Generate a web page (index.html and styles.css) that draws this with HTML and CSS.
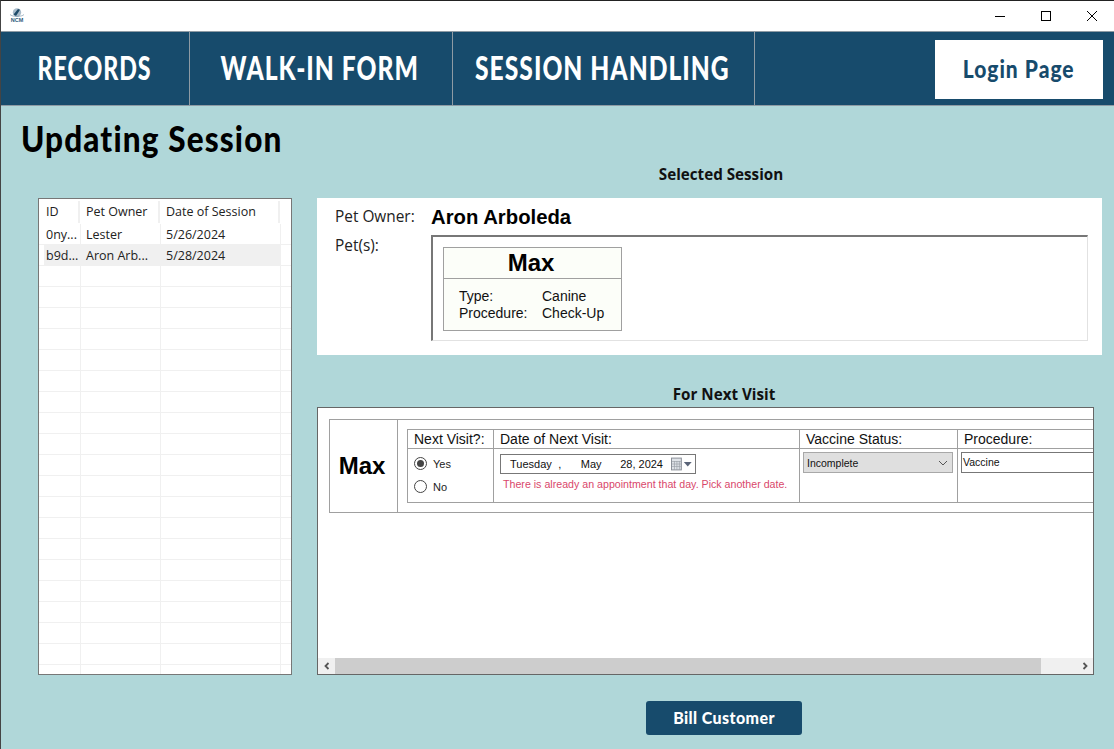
FILE: index.html
```html
<!DOCTYPE html>
<html lang="en">
<head>
<meta charset="utf-8">
<title>Updating Session</title>
<link rel="stylesheet" href="styles.css">
</head>
<body>
<div class="window">
  <header class="titlebar">
    <svg class="logo" width="16" height="15" viewBox="0 0 16 15"><circle cx="8" cy="4.500" r="4.200" fill="#a9bccb"/><path d="M4.500 6.500 L9 1 L11 1.800 L7 8 Z" fill="#1d4a68"/><path d="M1 6.500 C3 9 13 9 15 6.500" stroke="#6f8ca1" fill="none" stroke-width=".6"/><text x="8" y="14" text-anchor="middle" font-family="Liberation Sans" font-weight="700" font-size="5.500" fill="#2f5c7c">NCM</text></svg>
    <div class="winbtns">
      <svg width="12" height="12" viewBox="0 0 12 12"><path d="M1 6.500H11" stroke="#000" fill="none"/></svg>
      <svg width="12" height="12" viewBox="0 0 12 12"><rect x="1.500" y="1.500" width="9" height="9" stroke="#000" fill="none"/></svg>
      <svg width="12" height="12" viewBox="0 0 12 12"><path d="M1 1L11 11M11 1L1 11" stroke="#000" fill="none"/></svg>
    </div>
  </header>
  <nav class="nav">
    <a class="tab tab-records"><span>RECORDS</span></a>
    <a class="tab tab-walkin"><span>WALK-IN FORM</span></a>
    <a class="tab tab-session"><span>SESSION HANDLING</span></a>
    <a class="login"><span>Login Page</span></a>
  </nav>
  <main class="main">
    <h1 class="page-title"><span>Updating Session</span></h1>
    <div class="content">
      <section class="list">
        <div class="list-row list-head"><span>ID</span><span>Pet Owner</span><span>Date of Session</span></div>
        <div class="list-row"><span>0ny...</span><span>Lester</span><span>5/26/2024</span></div>
        <div class="list-row selected"><span>b9d...</span><span>Aron Arb...</span><span>5/28/2024</span></div>
        <div class="list-fill"></div>
      </section>
      <section class="right">
        <h2 class="heading heading-selected">Selected Session</h2>
        <div class="session-card">
          <div class="owner-row"><span class="label">Pet Owner:</span><strong class="owner">Aron Arboleda</strong></div>
          <div class="pets-row">
            <span class="label">Pet(s):</span>
            <div class="pets-box">
              <div class="pet-card">
                <div class="pet-name">Max</div>
                <div class="pet-info">
                  <span>Type:</span><span>Canine</span>
                  <span>Procedure:</span><span>Check-Up</span>
                </div>
              </div>
            </div>
          </div>
        </div>
        <h2 class="heading heading-next">For Next Visit</h2>
        <div class="visit-panel">
          <div class="visit-scroll">
            <div class="visit-row">
              <div class="visit-pet">Max</div>
              <div class="visit-body">
                <div class="visit-grid">
                  <div class="vh">Next Visit?:</div>
                  <div class="vh">Date of Next Visit:</div>
                  <div class="vh">Vaccine Status:</div>
                  <div class="vh">Procedure:</div>
                  <div class="vc radios">
                    <label class="radio"><span class="dot on"></span>Yes</label>
                    <label class="radio"><span class="dot"></span>No</label>
                  </div>
                  <div class="vc">
                    <div class="datepick">
                      <span class="d1">Tuesday</span><span class="d2">,</span><span class="d3">May</span><span class="d4">28, 2024</span>
                      <svg class="cal" width="24" height="14" viewBox="0 0 24 14"><rect x="0.500" y="1" width="10" height="12" fill="#dfe3e8" stroke="#8a8f98"/><path d="M1 4.500H10M1 7H10M1 9.500H10M3.500 4V13M6 4V13M8.500 4V13" stroke="#9aa0a8" stroke-width=".7" fill="none"/><path d="M13 5H21L17 9.500Z" fill="#5a6478"/></svg>
                    </div>
                    <p class="error">There is already an appointment that day. Pick another date.</p>
                  </div>
                  <div class="vc">
                    <div class="select">Incomplete<svg width="10" height="6" viewBox="0 0 10 6"><path d="M1 1L5 5L9 1" stroke="#555" fill="none"/></svg></div>
                  </div>
                  <div class="vc">
                    <div class="input">Vaccine</div>
                  </div>
                </div>
              </div>
            </div>
          </div>
          <div class="hscroll">
            <span class="sbtn"><svg width="8" height="8" viewBox="0 0 8 8"><path d="M5.500 1L2.500 4L5.500 7" stroke="#555" stroke-width="1.800" fill="none"/></svg></span>
            <span class="thumb"></span>
            <span class="track"></span>
            <span class="sbtn"><svg width="8" height="8" viewBox="0 0 8 8"><path d="M2.500 1L5.500 4L2.500 7" stroke="#555" stroke-width="1.800" fill="none"/></svg></span>
          </div>
        </div>
        <div class="actions"><button class="bill">Bill Customer</button></div>
      </section>
    </div>
  </main>
</div>
</body>
</html>
```
FILE: styles.css
```css
* { box-sizing: border-box; }
html, body { margin: 0; padding: 0; }
body { width: 1114px; height: 749px; overflow: hidden; background: #b0d7d9; font-family: "Open Sans", sans-serif; }
.window { width: 1114px; height: 749px; border-top: 1px solid #222; border-left: 1px solid #444; display: flex; flex-direction: column; background: #b0d7d9; }
.titlebar { height: 30px; background: #fff; display: flex; align-items: flex-start; justify-content: space-between; flex: none; }
.logo { margin: 7px 0 0 8px; }
.winbtns { display: flex; gap: 34px; padding: 9px 16px 0 0; }
.winbtns svg { display: block; }
.nav { height: 75px; background: #174b6c; border-top: 1px solid #8e9ba4; border-bottom: 1px solid #8e9ba4; display: flex; flex: none; position: relative; padding-left: 1px; }
.tab { color: #fff; font-family: "Lato", sans-serif; font-weight: 900; font-size: 32px; letter-spacing: 1.300px; display: flex; align-items: center; justify-content: center; border-right: 1px solid #8e9ba4; height: 100%; white-space: nowrap; padding: 0 2px 2px 0; }
.tab span, .login span, .page-title span { display: inline-block; }
.tab-records { width: 188px; }
.tab-records span { transform: scaleX(.725); }
.tab-walkin { width: 263px; }
.tab-walkin span { transform: scaleX(.77); }
.tab-session { width: 302px; }
.tab-session span { transform: scaleX(.77); }
.login { margin: 8px 0 0 180px; width: 168px; height: 59px; padding-bottom: 3px; background: #fff; color: #174b6c; font-family: "Lato", sans-serif; font-weight: 900; font-size: 25px; letter-spacing: 1.200px; display: flex; align-items: center; justify-content: center; white-space: nowrap; }
.login span { transform: scaleX(.84); }
.main { flex: 1; display: flex; flex-direction: column; min-height: 0; }
.page-title { margin: 11px 0 0 20px; font-family: "Lato", sans-serif; font-weight: 900; font-size: 36px; line-height: 42px; letter-spacing: 1.300px; color: #000; white-space: nowrap; }
.page-title span { transform: scaleX(.875); transform-origin: left center; }
.content { display: flex; gap: 25px; padding: 0 0 0 37px; margin-top: 2px; }
.list { width: 254px; height: 477px; margin-top: 37px; background: #fff; border: 1px solid #777; display: flex; flex-direction: column; font-size: 12.500px; color: #222; }
.list-row { display: grid; grid-template-columns: 42px 80px 120px 10px; height: 21px; flex: none; border-bottom: 1px solid #f0f0f0; align-items: center; }
.list-row span { padding-left: 5px; height: 100%; line-height: 22px; border-right: 1px solid #f0f0f0; white-space: nowrap; overflow: hidden; }
.list-row span:first-child { padding-left: 7px; }
.list-head { height: 25px; border-bottom: 0; grid-template-columns: 41px 80px 120px 10px; }
.list-head span { height: 22px; line-height: 22px; padding-left: 6px; border-right: 2px solid #f0f0f0; }
.selected { background: linear-gradient(to right, #fff 5px, #f0f0f0 5px, #f0f0f0 241px, #fff 241px); }
.list-fill { flex: 1; background-image: linear-gradient(to bottom, transparent 20px, #f0f0f0 20px), linear-gradient(to right, transparent 41px, #f0f0f0 41px, #f0f0f0 42px, transparent 42px, transparent 121px, #f0f0f0 121px, #f0f0f0 122px, transparent 122px, transparent 241px, #f0f0f0 241px, #f0f0f0 242px, transparent 242px); background-size: 100% 21px, 100% 100%; }
.right { width: 785px; }
.heading { margin: 0; font-family: "Open Sans", sans-serif; font-size: 15.200px; font-weight: 700; color: #111; line-height: 20px; text-align: center; }
.heading-selected { padding: 3px 0 0 23px; height: 37px; }
.session-card { width: 785px; height: 157px; background: #fff; padding: 8px 14px 0 18px; }
.owner-row { display: flex; align-items: center; height: 22px; }
.label { font-size: 15.400px; color: #222; width: 96px; flex: none; line-height: 20px; }
.owner { font-family: "Liberation Sans", sans-serif; font-size: 20.300px; font-weight: 700; color: #000; }
.pets-row { display: flex; margin-top: 7px; }
.pets-row .label { padding-top: 1px; }
.pets-box { width: 657px; height: 106px; border-top: 2px solid #777; border-left: 2px solid #777; border-right: 1px solid #e2e2e2; border-bottom: 1px solid #e2e2e2; padding: 10px 0 0 10px; }
.pet-card { width: 179px; height: 84px; background: #fcfef9; border: 1px solid #a0a0a0; }
.pet-name { height: 31px; border-bottom: 1px solid #a0a0a0; font-family: "Liberation Sans", sans-serif; font-size: 24px; font-weight: 700; color: #000; text-align: center; line-height: 30px; padding-right: 3px; }
.pet-info { display: grid; grid-template-columns: 83px auto; padding: 9px 0 0 15px; font-family: "Liberation Sans", sans-serif; font-size: 14px; line-height: 17px; color: #111; }
.heading-next { height: 52px; padding: 29px 0 0 37px; width: 777px; }
.visit-panel { width: 777px; height: 268px; background: #fff; border: 1px solid #666; display: flex; flex-direction: column; }
.visit-scroll { flex: 1; padding: 11px 0 0 11px; overflow: hidden; }
.visit-row { display: flex; width: 764px; height: 94px; border-top: 1px solid #a0a0a0; border-bottom: 1px solid #a0a0a0; border-left: 1px solid #a0a0a0; }
.visit-pet { width: 68px; flex: none; border-right: 1px solid #a0a0a0; font-family: "Liberation Sans", sans-serif; font-weight: 700; font-size: 24px; color: #000; display: flex; align-items: center; justify-content: center; padding-right: 3px; }
.visit-body { padding: 9px 0 0 9px; flex: 1; overflow: hidden; }
.visit-grid { display: grid; grid-template-columns: 86px 306px 158px 200px; grid-template-rows: 19px 53px; width: 760px; border-top: 1px solid #a0a0a0; border-bottom: 1px solid #a0a0a0; }
.vh, .vc { border-left: 1px solid #a0a0a0; }
.vh { font-family: "Liberation Sans", sans-serif; font-size: 14px; line-height: 19px; padding-left: 6px; color: #111; border-bottom: 1px solid #a0a0a0; white-space: nowrap; }
.vc { padding: 5px 3px 0 6px; position: relative; }
.radios { padding-top: 3px; }
.radio { display: flex; align-items: center; font-family: "Liberation Sans", sans-serif; font-size: 11px; color: #222; gap: 6px; height: 23px; }
.dot { width: 13px; height: 13px; border: 1px solid #444; border-radius: 50%; background: #fff; display: inline-block; position: relative; flex: none; }
.dot.on::after { content: ""; position: absolute; left: 2px; top: 2px; width: 7px; height: 7px; border-radius: 50%; background: #444; }
.datepick { width: 196px; height: 20px; border: 1px solid #777; font-family: "Liberation Sans", sans-serif; font-size: 11px; color: #111; display: flex; align-items: center; position: relative; }
.d1 { margin-left: 9px; width: 49px; }
.d2 { width: 23px; }
.d3 { width: 40px; }
.d4 { width: 47px; white-space: nowrap; }
.cal { margin-left: 5px; }
.error { margin: 3px 0 0 3px; font-family: "Liberation Sans", sans-serif; font-size: 10.650px; line-height: 14px; color: #d9476b; white-space: nowrap; }
.select { margin: -2px 0 0 -3px; width: 150px; height: 21px; background: #dfdfdf; border: 1px solid #a8a8a8; font-family: "Liberation Sans", sans-serif; font-size: 10.500px; color: #111; display: flex; align-items: center; justify-content: space-between; padding: 0 4px 0 3px; }
.input { margin: -2px 0 0 -3px; width: 140px; height: 21px; border: 1px solid #777; font-family: "Liberation Sans", sans-serif; font-size: 10.500px; color: #111; padding: 1px 1px; line-height: 16px; }
.hscroll { height: 16px; display: flex; background: #f0f0f0; flex: none; }
.sbtn { width: 17px; display: flex; align-items: center; justify-content: center; flex: none; }
.thumb { width: 706px; background: #cdcdcd; }
.track { flex: 1; }
.actions { padding: 26px 0 0 329px; }
.bill { display: block; width: 156px; height: 34px; padding-bottom: 3px; background: #174b6c; color: #fff; border: 0; border-radius: 3px; font-family: "Lato", sans-serif; font-weight: 900; font-size: 16px; letter-spacing: .4px; }
```
